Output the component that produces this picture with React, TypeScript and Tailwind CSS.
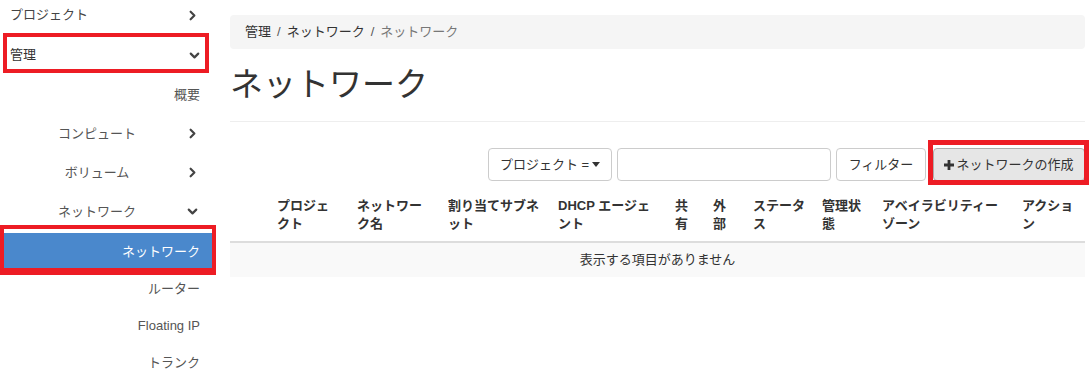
import { ChevronDown, ChevronRight } from "lucide-react";

const font = { fontFamily: '"Liberation Sans", "Noto Sans CJK JP", sans-serif' };

function Chevron({ down }: { down?: boolean }) {
  return down ? (
    <ChevronDown size={15} strokeWidth={3.5} className="text-[#444]" />
  ) : (
    <ChevronRight size={15} strokeWidth={3.5} className="text-[#444]" />
  );
}

function Sidebar() {
  return (
    <aside className="relative w-[212px] shrink-0 text-[13px] text-[#444]">
      <div className="-mt-[5px]">
        <div className="flex h-[40px] items-center justify-between pl-[10px] pr-[12px]">
          <span>プロジェクト</span>
          <Chevron />
        </div>
        <div className="flex h-[40px] items-center justify-between pl-[10px] pr-[10px] text-[#333]">
          <span>管理</span>
          <Chevron down />
        </div>
        <div className="flex h-[39px] items-center justify-end pr-[12px] text-[#555]">概要</div>
        {["コンピュート", "ボリューム", "ネットワーク"].map((label) => (
          <div key={label} className="flex h-[39px] items-center pr-[12px] text-[#555]">
            <span className="w-[180px] pl-[14px] text-center">{label}</span>
            <span className="ml-auto">
              <Chevron down={label === "ネットワーク"} />
            </span>
          </div>
        ))}
        <div className="mt-[2px] flex h-[37px] items-center justify-end bg-[#4a88cc] pr-[12px] text-white">
          ネットワーク
        </div>
        <div className="flex h-[37px] items-center justify-end pr-[12px] text-[#555]">ルーター</div>
        <div className="flex h-[37px] items-center justify-end pr-[12px] text-[#555]">Floating IP</div>
        <div className="flex h-[37px] items-center justify-end pr-[12px] text-[#555]">トランク</div>
      </div>
      {/* annotation boxes */}
      <div className="pointer-events-none absolute left-[3px] top-[33px] h-[40px] w-[206px] border-4 border-[#ed1c24]" />
      <div className="pointer-events-none absolute left-0 top-[225px] h-[50px] w-[216px] border-4 border-b-[7px] border-[#ed1c24]" />
    </aside>
  );
}

const cols = [39, 80, 91, 110, 117, 38, 40, 69, 60, 140, 71];
const headers = [
  "",
  "プロジェクト",
  "ネットワーク名",
  "割り当てサブネット",
  "DHCP エージェント",
  "共有",
  "外部",
  "ステータス",
  "管理状態",
  "アベイラビリティーゾーン",
  "アクション",
];

export default function App() {
  return (
    <div className="flex h-[381px] w-[1089px] overflow-hidden bg-white text-[#333]" style={font}>
      <Sidebar />
      <main className="min-w-0 flex-1 pl-[18px] pr-[4px]">
        <nav className="mt-[15px] flex h-[34px] items-center rounded bg-[#f5f5f5] px-[15px] text-[13px]">
          <span className="text-[#333]">管理</span>
          <span className="px-[6px] text-[#555]">/</span>
          <span className="text-[#333]">ネットワーク</span>
          <span className="px-[6px] text-[#555]">/</span>
          <span className="text-[#777]">ネットワーク</span>
        </nav>

        <div className="border-b border-[#eee] pb-[16px] pt-[16px]">
          <h1 className="text-[33px] font-normal leading-[40px] text-[#333]">ネットワーク</h1>
        </div>

        <div className="mt-[26px] flex justify-end text-[13px]">
          <button className="flex h-[33px] w-[124px] items-center justify-center gap-[3px] rounded border border-[#ccc] bg-white text-[#333]">
            <span>プロジェクト =</span>
            <svg width="8" height="5" viewBox="0 0 8 5">
              <path d="M0 0h8L4 5z" fill="#333" />
            </svg>
          </button>
          <input className="ml-[5px] h-[33px] w-[214px] rounded border border-[#ccc] bg-white" />
          <button className="ml-[5px] h-[33px] w-[90px] rounded border border-[#ccc] bg-white text-[#333]">
            フィルター
          </button>
          <div className="relative ml-[7px]">
            <button className="flex h-[33px] w-[152px] items-center justify-center gap-[2px] rounded border border-[#adadad] bg-[#e6e6e6] text-[#333]">
              <svg width="10" height="10" viewBox="0 0 10 10">
                <path d="M3.6 0h2.8v3.6H10v2.8H6.4V10H3.6V6.4H0V3.6h3.6z" fill="#333" />
              </svg>
              <span>ネットワークの作成</span>
            </button>
            <div className="pointer-events-none absolute -bottom-[4px] -left-[5px] -right-[4px] -top-[8px] border-[5px] border-[#ed1c24]" />
          </div>
        </div>

        <table className="mt-[8px] w-full table-fixed border-collapse text-[13px]">
          <colgroup>
            {cols.map((w, i) => (
              <col key={i} style={{ width: w }} />
            ))}
          </colgroup>
          <thead>
            <tr className="border-b-2 border-[#ddd]">
              {headers.map((h, i) => (
                <th
                  key={i}
                  className="px-[8px] py-[8px] text-left align-bottom font-bold leading-[18px] text-[#333] [line-break:loose]"
                >
                  {h}
                </th>
              ))}
            </tr>
          </thead>
          <tbody>
            <tr className="bg-[#f9f9f9]">
              <td colSpan={11} className="h-[35px] text-center text-[#333]">
                表示する項目がありません
              </td>
            </tr>
          </tbody>
        </table>
      </main>
    </div>
  );
}
